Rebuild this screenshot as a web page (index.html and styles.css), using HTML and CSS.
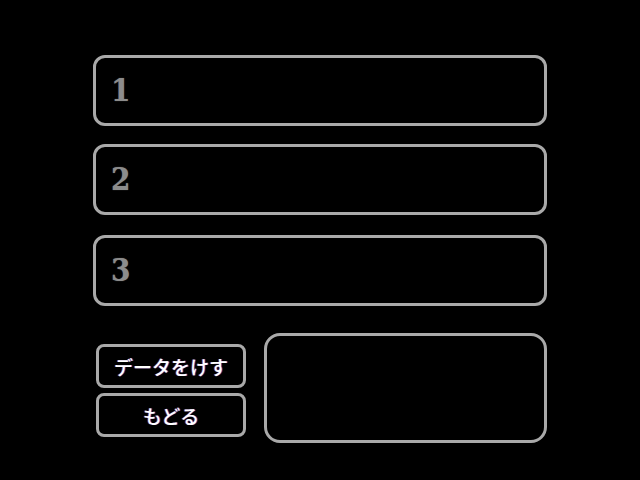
FILE: index.html
```html
<!DOCTYPE html>
<html lang="ja">
<head>
<meta charset="utf-8">
<link rel="stylesheet" href="styles.css">
</head>
<body>
<main class="screen">
  <section class="slots">
    <div class="slot"><span class="num">1</span></div>
    <div class="slot slot-2"><span class="num">2</span></div>
    <div class="slot slot-3"><span class="num">3</span></div>
  </section>
  <section class="bottom">
    <div class="buttons">
      <div class="btn">データをけす</div>
      <div class="btn">もどる</div>
    </div>
    <div class="info"></div>
  </section>
</main>
</body>
</html>
```
FILE: styles.css
```css
html, body {
  margin: 0;
  padding: 0;
  background: #000;
  width: 640px;
  height: 480px;
  overflow: hidden;
}
.screen {
  padding: 55px 0 0 93px;
  width: 454px;
}
.slots {
  display: flex;
  flex-direction: column;
}
.slot {
  box-sizing: border-box;
  height: 71px;
  border: 3px solid #a9a9a9;
  border-radius: 12px;
  display: flex;
  align-items: center;
  padding-left: 15px;
}
.slot-2 { margin-top: 18px; }
.slot-3 { margin-top: 20px; }
.num {
  font-family: "DejaVu Serif Condensed", "DejaVu Serif", serif;
  font-stretch: condensed;
  font-weight: bold;
  font-size: 31px;
  line-height: 1;
  color: #8c8c8c;
  text-shadow: 0 0 1px #666;
}
.bottom {
  display: flex;
  margin-top: 27px;
}
.buttons {
  display: flex;
  flex-direction: column;
  gap: 5px;
  margin: 11px 0 0 3px;
  width: 150px;
}
.btn {
  box-sizing: border-box;
  height: 44px;
  border: 3px solid #a9a9a9;
  border-radius: 8px;
  color: #fff;
  font-family: "Noto Sans CJK JP", sans-serif;
  font-size: 19px;
  font-weight: 500;
  letter-spacing: 0;
  display: flex;
  align-items: center;
  justify-content: center;
  text-shadow: 1px 0 0 rgba(80, 80, 255, 0.6), -1px 0 0 rgba(255, 80, 80, 0.4);
}
.info {
  box-sizing: border-box;
  margin-left: 18px;
  width: 283px;
  height: 110px;
  border: 3px solid #a9a9a9;
  border-radius: 16px;
}
```
